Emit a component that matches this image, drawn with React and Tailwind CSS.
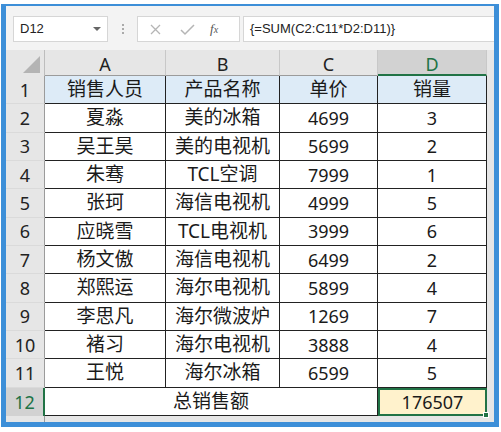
import React from "react";

const rows = [
  ["销售人员", "产品名称", "单价", "销量"],
  ["夏淼", "美的冰箱", "4699", "3"],
  ["吴王昊", "美的电视机", "5699", "2"],
  ["朱骞", "TCL空调", "7999", "1"],
  ["张珂", "海信电视机", "4999", "5"],
  ["应晓雪", "TCL电视机", "3999", "6"],
  ["杨文傲", "海信电视机", "6499", "2"],
  ["郑熙运", "海尔电视机", "5899", "4"],
  ["李思凡", "海尔微波炉", "1269", "7"],
  ["褚习", "海尔电视机", "3888", "4"],
  ["王悦", "海尔冰箱", "6599", "5"],
];

const font = { fontFamily: '"Noto Sans", "Noto Sans CJK SC", sans-serif' };
const isCjk = (s) => /[^\x00-\x7f]/.test(s);

export default function App() {
  return (
    <div className="w-[501px] h-[432px] bg-white pt-[4px] pl-[1px] pr-[2px] pb-[5px]" style={font}>
      <div className="w-full h-full border-[#3d8fd8] border-l-[5px] border-r-[5px] border-b-[5px] border-t-[2px] bg-[#e6e6e6] flex flex-col overflow-hidden">
        {/* formula bar */}
        <div className="h-[44px] bg-[#f3f3f3] flex items-start pt-[10px] pl-[7px] shrink-0">
          <div className="w-[95px] h-[26px] bg-white border border-[#d6d6d6] flex items-center pl-[6px] pr-[6px] justify-between">
            <span className="text-[13px] text-[#222]" style={{ fontFamily: '"Liberation Sans", sans-serif' }}>D12</span>
            <span className="w-0 h-0 border-l-[4px] border-r-[4px] border-t-[4px] border-l-transparent border-r-transparent border-t-[#666]"></span>
          </div>
          <div className="w-[29px] h-[26px] flex flex-col items-center justify-center gap-[2px]">
            <span className="w-[2px] h-[2px] bg-[#aaa]"></span>
            <span className="w-[2px] h-[2px] bg-[#aaa]"></span>
            <span className="w-[2px] h-[2px] bg-[#aaa]"></span>
          </div>
          <div className="w-[103px] h-[26px] bg-white border border-[#d6d6d6] flex items-center">
            <svg width="34" height="24" viewBox="0 0 34 24" className="ml-[1px]">
              <path d="M12 8 L21 17 M21 8 L12 17" stroke="#b5b5b5" strokeWidth="1.3" fill="none" />
            </svg>
            <svg width="30" height="24" viewBox="0 0 30 24">
              <path d="M8 13 L12 17 L21 8" stroke="#b5b5b5" strokeWidth="1.5" fill="none" />
            </svg>
            <span className="ml-[7px] text-[13px] italic text-[#555]" style={{ fontFamily: '"Liberation Serif", serif' }}>f<span className="text-[10px]">x</span></span>
          </div>
          <div className="ml-[3px] flex-1 h-[26px] bg-white border border-[#d6d6d6] border-r-0 flex items-center pl-[6px]">
            <span className="text-[13px] text-[#222]" style={{ fontFamily: '"Liberation Sans", sans-serif' }}>{"{=SUM(C2:C11*D2:D11)}"}</span>
          </div>
        </div>
        {/* sheet */}
        <div className="grid grid-cols-[39px_121px_114px_98px_109px_1fr] grid-rows-[26px_repeat(12,28.33px)_1fr] flex-1 bg-[#e6e6e6] text-[18px] leading-none">
          {/* header row */}
          <div className="bg-[#e6e6e6] border-r border-[#bdbdbd] relative">
            <div className="absolute right-[4px] bottom-[3px] w-0 h-0" style={{ borderBottom: "17px solid #b4b4b4", borderLeft: "17px solid transparent" }}></div>
          </div>
          {["A", "B", "C"].map((c) => (
            <div key={c} className="bg-[#e6e6e6] border-r border-[#c8c8c8] border-b border-b-[#9b9b9b] flex items-end justify-center pb-[2px] text-[#222]">{c}</div>
          ))}
          <div className="bg-[#d2d2d2] border-r border-[#c8c8c8] border-b-[2px] border-b-[#217346] flex items-end justify-center pb-[1px] text-[#217346]">D</div>
          <div className="bg-[#e6e6e6]"></div>

          {rows.map((r, i) => (
            <React.Fragment key={i}>
              <div className="bg-[#e6e6e6] border-r border-[#9b9b9b] border-b border-b-[#dadada] flex items-center justify-center text-[#222]">{i + 1}</div>
              {r.map((v, j) => (
                <div
                  key={j}
                  className={`${i === 0 ? "bg-[#ddebf7]" : "bg-white"} ${isCjk(v) ? "text-[19px]" : "text-[18px]"} border-r border-b border-[#222] flex items-center justify-center text-[#1a1a1a] whitespace-nowrap`}
                >
                  {v}
                </div>
              ))}
              <div className="bg-[#e6e6e6]"></div>
            </React.Fragment>
          ))}
          {/* row 12 */}
          <div className="bg-[#d2d2d2] border-r-[2px] border-[#217346] flex items-center justify-center text-[#217346]">12</div>
          <div className="col-span-3 bg-white border-r border-b border-[#222] flex items-center justify-center text-[19px] text-[#1a1a1a]">总销售额</div>
          <div className="bg-[#fff2cc] border-[2px] border-[#217346] flex items-center justify-center text-[#1a1a1a] relative">
            176507
            <span className="absolute right-[-4px] bottom-[-4px] w-[6px] h-[6px] bg-[#217346] border border-white"></span>
          </div>
          <div className="bg-[#e6e6e6]"></div>
          <div className="bg-[#e6e6e6] border-r border-[#9b9b9b]"></div>
          <div className="col-span-5 bg-[#e6e6e6]"></div>
        </div>
      </div>
    </div>
  );
}
